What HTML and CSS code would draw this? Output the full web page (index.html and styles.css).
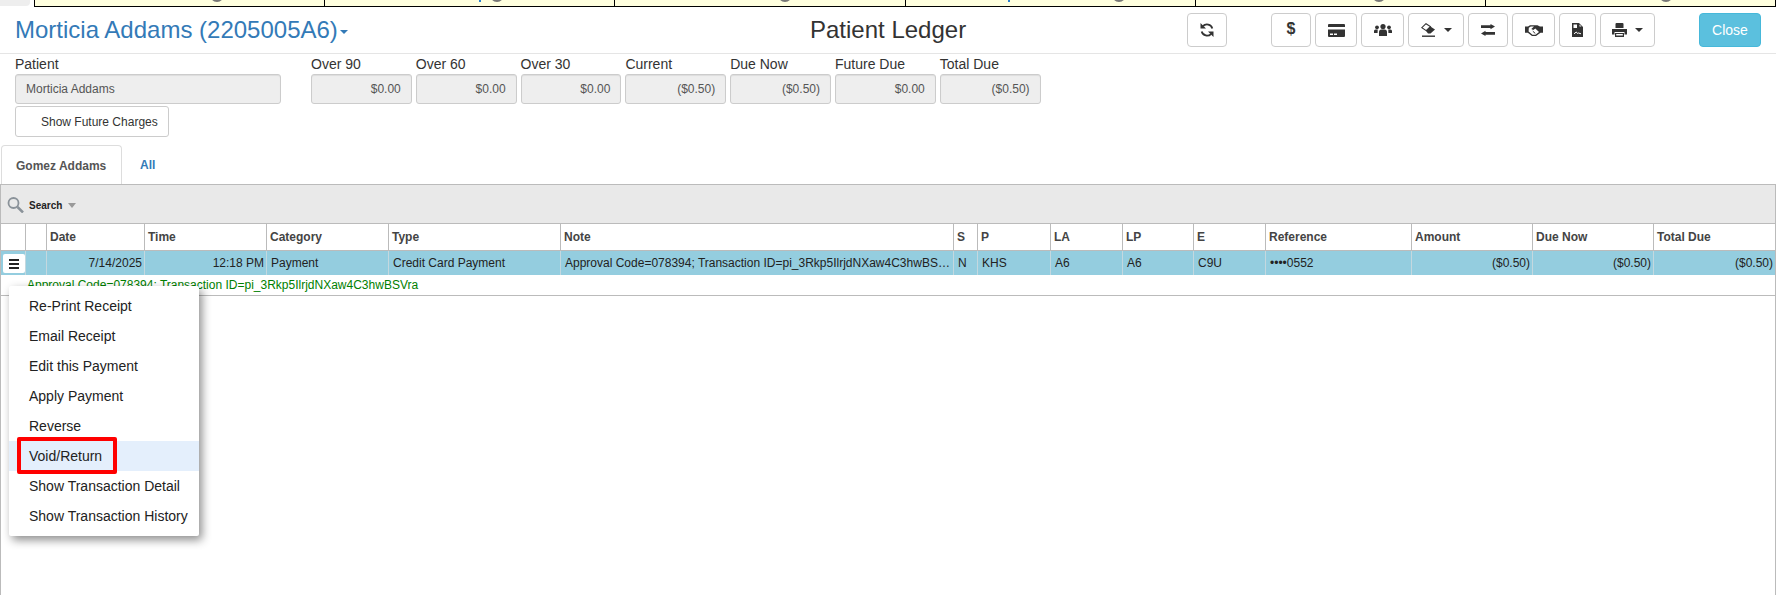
FILE: index.html
```html
<!DOCTYPE html>
<html lang="en">
<head>
    <meta charset="UTF-8">
    <title>Patient Ledger</title>
    <link rel="stylesheet" href="styles.css">
</head>
<body>

    <div class="strip">
        <div class="strip-corner"></div>
        <div class="strip-cell"><span class="knob"></span></div>
        <div class="strip-cell"><span class="mark"></span><span class="knob"></span></div>
        <div class="strip-cell"><span class="knob"></span></div>
        <div class="strip-cell"><span class="mark"></span><span class="knob"></span></div>
        <div class="strip-cell"><span class="knob"></span></div>
        <div class="strip-cell"><span class="knob"></span></div>
    </div>

    <div class="header">
        <h1 class="patient-name">Morticia Addams (2205005A6)<span class="caret"></span></h1>
        <h2 class="page-title">Patient Ledger</h2>
        <div class="toolbar">
            <button class="tool tool-refresh">
                <svg width="14" height="14" viewBox="0 0 14 14"><path d="M12.300 5.400A5.500 5.500 0 0 0 2.900 3.200M1.700 8.600a5.500 5.500 0 0 0 9.400 2.200" fill="none" stroke="#333" stroke-width="1.800"/><path d="M.5 0v5.500H6zM13.500 14V8.500H8z" fill="#333"/></svg>
            </button>
            <button class="tool tool-dollar">$</button>
            <button class="tool tool-card">
                <svg width="17" height="13" viewBox="0 0 17 13"><path d="M1 0h15a1 1 0 0 1 1 1v2H0V1a1 1 0 0 1 1-1zM0 5.500h17V12a1 1 0 0 1-1 1H1a1 1 0 0 1-1-1zm2 4v1.500h3V9.500zm4 0v1.500h3V9.500z" fill="#333"/></svg>
            </button>
            <button class="tool tool-group">
                <svg width="18" height="12" viewBox="0 0 18 12"><circle cx="9" cy="2.600" r="2.600" fill="#333"/><circle cx="3" cy="3.300" r="1.900" fill="#333"/><circle cx="15" cy="3.300" r="1.900" fill="#333"/><path d="M5 12V8a2.500 2.500 0 0 1 2.500-2.500h3A2.500 2.500 0 0 1 13 8v4zM0 9V7a1.500 1.500 0 0 1 1.500-1.500h2.200L3.600 9zM18 9V7a1.500 1.500 0 0 0-1.500-1.500h-2.200l.1 3.500z" fill="#333"/></svg>
            </button>
            <button class="tool tool-eraser">
                <svg width="15" height="14" viewBox="0 0 15 14"><path d="M5 .7.8 4.700l4.400 2.900 4.200-4z" fill="#fff" stroke="#333" stroke-width="1.100"/><path d="M9.400 3.500 14 6.500l-4.500 4H7L4.800 7.800z" fill="#333"/><path d="M1 13.200h13" stroke="#333" stroke-width="1.400"/></svg>
                <span class="tool-caret"></span>
            </button>
            <button class="tool tool-exchange">
                <svg width="14" height="12" viewBox="0 0 14 12"><path d="M0 1.200h9.500V0L14 2.600 9.500 5.200V4H0zM14 8H4.500V6.800L0 9.400 4.500 12v-1.200H14z" fill="#333"/></svg>
            </button>
            <button class="tool tool-hands">
                <svg width="18" height="11" viewBox="0 0 18 11"><path d="M0 1.500h3L5 .3h7.500L15 1.500h3v6.200h-2.500L11 11H7L2.800 7.700H0z" fill="#333"/><path d="M3.800 2.800 5.800 1.500H9L6.300 4l2 1 2-1.500 3.700 3.400L10.500 9.700H7.500L3.600 6.500z" fill="#fff"/><path d="M7.800 6.200 10.300 8.500" stroke="#333"/></svg>
            </button>
            <button class="tool tool-file">
                <svg width="11" height="14" viewBox="0 0 11 14"><path d="M0 0h7l4 4v10H0z" fill="#333"/><path d="M1.500 1.500h3.500v3.500H1.500zM7.500 1.500 9.500 3.500h-2z" fill="#fff"/><path d="M2 10.800 4.300 9l1.200 1.500 1-.5 2.500.8" fill="none" stroke="#fff"/></svg>
            </button>
            <button class="tool tool-print">
                <svg width="15" height="14" viewBox="0 0 15 14"><path d="M3.500 1a1 1 0 0 1 1-1h6a1 1 0 0 1 1 1v4h-8zM0 6h15v5.500h-2.500V9h-10v2.500H0zM3 10h9v4H3z" fill="#333"/><path d="M4.200 11h6.600v1.500H4.200z" fill="#fff"/></svg>
                <span class="tool-caret"></span>
            </button>
            <button class="close-btn">Close</button>
        </div>
    </div>

    <div class="summary">
        <div class="field field-patient">
            <label>Patient</label>
            <div class="readonly">Morticia Addams</div>
        </div>
        <div class="field-group">
            <div class="field">
                <label>Over 90</label>
                <div class="readonly amount">$0.00</div>
            </div>
            <div class="field">
                <label>Over 60</label>
                <div class="readonly amount">$0.00</div>
            </div>
            <div class="field">
                <label>Over 30</label>
                <div class="readonly amount">$0.00</div>
            </div>
            <div class="field">
                <label>Current</label>
                <div class="readonly amount">($0.50)</div>
            </div>
            <div class="field">
                <label>Due Now</label>
                <div class="readonly amount">($0.50)</div>
            </div>
            <div class="field">
                <label>Future Due</label>
                <div class="readonly amount">$0.00</div>
            </div>
            <div class="field">
                <label>Total Due</label>
                <div class="readonly amount">($0.50)</div>
            </div>
        </div>
    </div>
    <button class="future-btn">Show Future Charges</button>

    <div class="tabs">
        <div class="tab active">Gomez Addams</div>
        <div class="tab">All</div>
    </div>

    <div class="grid-panel">
        <div class="search-bar">
            <svg width="18" height="16" viewBox="0 0 18 16"><circle cx="6.500" cy="6" r="5" fill="none" stroke="#8a9299" stroke-width="1.800"/><path d="M10.500 10l5.500 5.500" stroke="#8a9299" stroke-width="2.500"/></svg>
            <span class="search-label">Search</span>
            <span class="search-caret"></span>
        </div>

        <table class="ledger">
            <colgroup>
                <col class="c-menu"><col class="c-blank"><col class="c-date"><col class="c-time"><col class="c-cat"><col class="c-type"><col class="c-note"><col class="c-s"><col class="c-p"><col class="c-la"><col class="c-lp"><col class="c-e"><col class="c-ref"><col class="c-amt"><col class="c-due"><col class="c-total">
            </colgroup>
            <thead>
                <tr>
                    <th></th><th></th><th>Date</th><th>Time</th><th>Category</th><th>Type</th><th>Note</th><th>S</th><th>P</th><th>LA</th><th>LP</th><th>E</th><th>Reference</th><th>Amount</th><th>Due Now</th><th>Total Due</th>
                </tr>
            </thead>
            <tbody>
                <tr class="selected">
                    <td class="menu-cell"><span class="menu-btn"><i></i><i></i><i></i></span></td>
                    <td></td>
                    <td class="num">7/14/2025</td>
                    <td class="num">12:18 PM</td>
                    <td>Payment</td>
                    <td>Credit Card Payment</td>
                    <td class="note">Approval Code=078394; Transaction ID=pi_3Rkp5IlrjdNXaw4C3hwBSVra</td>
                    <td>N</td>
                    <td>KHS</td>
                    <td>A6</td>
                    <td>A6</td>
                    <td>C9U</td>
                    <td>••••0552</td>
                    <td class="num">($0.50)</td>
                    <td class="num">($0.50)</td>
                    <td class="num">($0.50)</td>
                </tr>
                <tr class="detail">
                    <td></td>
                    <td colspan="15">Approval Code=078394; Transaction ID=pi_3Rkp5IlrjdNXaw4C3hwBSVra</td>
                </tr>
            </tbody>
        </table>

        <ul class="context-menu">
            <li>Re-Print Receipt</li>
            <li>Email Receipt</li>
            <li>Edit this Payment</li>
            <li>Apply Payment</li>
            <li>Reverse</li>
            <li class="hover"><span class="callout">Void/Return</span></li>
            <li>Show Transaction Detail</li>
            <li>Show Transaction History</li>
        </ul>
    </div>

</body>
</html>
```

FILE: styles.css
```css
* {
    box-sizing: border-box;
}

html, body {
    height: 595px;
    overflow: hidden;
}

body {
    margin: 0;
    background-color: #fff;
    font-family: "Liberation Sans", Arial, sans-serif;
    color: #333;
}

/* cut-off strip above the header */
.strip {
    display: flex;
    height: 7px;
    width: 1776px;
}

.strip-corner {
    width: 30px;
    margin-right: 4px;
    height: 6px;
    background-color: #eee;
    border-bottom-right-radius: 4px;
}

.strip-cell {
    position: relative;
    flex: 1;
    background-color: #ffffdf;
    border-left: 1px solid #000;
    border-bottom: 1px solid #000;
    overflow: hidden;
}

.strip-cell:last-child {
    border-right: 1px solid #000;
}

.knob {
    position: absolute;
    top: -12px;
    left: 175px;
    width: 14px;
    height: 14px;
    border-radius: 50%;
    background-color: #777;
}

.mark {
    position: absolute;
    top: 0;
    left: 154px;
    width: 2px;
    height: 2px;
    background-color: #2a7fd0;
}

.strip-cell:nth-child(3) .knob { left: 165px; }
.strip-cell:nth-child(4) .knob { left: 163px; }
.strip-cell:nth-child(5) .knob { left: 206px; }
.strip-cell:nth-child(5) .mark { left: 102px; }
.strip-cell:nth-child(6) .knob { left: 176px; }
.strip-cell:nth-child(7) .knob { left: 173px; }

.header {
    display: flex;
    align-items: center;
    height: 47px;
    width: 1776px;
    border-bottom: 1px solid #e5e5e5;
    padding-left: 15px;
}

.patient-name {
    flex: 0 0 795px;
    margin: 0;
    font-size: 24px;
    font-weight: normal;
    color: #337ab7;
}

.caret {
    display: inline-block;
    margin-left: 2px;
    vertical-align: middle;
    border-top: 4px solid #337ab7;
    border-left: 4px solid transparent;
    border-right: 4px solid transparent;
}

.page-title {
    flex: 0 0 377px;
    margin: 0;
    font-size: 24px;
    font-weight: normal;
    color: #333;
}

.toolbar {
    display: flex;
    align-items: center;
    gap: 4px;
}

.tool {
    display: flex;
    flex-shrink: 0;
    align-items: center;
    justify-content: center;
    height: 34px;
    padding: 0;
    background-color: #fff;
    border: 1px solid #ccc;
    border-radius: 4px;
    color: #333;
}

.tool-refresh {
    width: 40px;
    margin-right: 40px;
}

.tool-dollar {
    width: 40px;
    padding-bottom: 3px;
    font-family: inherit;
    font-size: 16px;
    font-weight: bold;
}

.tool-card {
    width: 42px;
}

.tool-group {
    width: 43px;
}

.tool-eraser {
    width: 56px;
}

.tool-exchange {
    width: 40px;
}

.tool-hands {
    width: 43px;
}

.tool-file {
    width: 37px;
}

.tool-print {
    width: 55px;
    margin-right: 40px;
}

.tool-caret {
    margin-left: 8px;
    border-top: 4px solid #333;
    border-left: 4px solid transparent;
    border-right: 4px solid transparent;
}

.close-btn {
    flex-shrink: 0;
    width: 62px;
    height: 34px;
    padding: 0;
    background-color: #5bc0de;
    border: 1px solid #46b8da;
    border-radius: 4px;
    color: #fff;
    font-family: inherit;
    font-size: 14px;
}

.summary {
    display: flex;
    padding-left: 15px;
}

.field label {
    display: block;
    font-size: 14px;
    line-height: 20px;
    color: #333;
}

.field-patient {
    width: 266px;
    margin-right: 30px;
}

.field-patient .readonly {
    width: 266px;
}

.field-group {
    display: flex;
    gap: 4px;
}

.readonly {
    width: 100.800px;
    height: 30px;
    line-height: 28px;
    padding: 0 10px;
    background-color: #eee;
    border: 1px solid #ccc;
    border-radius: 3px;
    font-size: 12px;
    color: #555;
    box-shadow: inset 0 1px 1px rgba(0, 0, 0, 0.075);
}

.amount {
    text-align: right;
}

.future-btn {
    display: block;
    width: 154px;
    height: 31px;
    margin: 2px 0 0 15px;
    padding: 0 0 0 25px;
    background-color: #fff;
    border: 1px solid #ccc;
    border-radius: 3px;
    font-family: inherit;
    font-size: 12px;
    color: #333;
    white-space: nowrap;
    text-align: left;
}

.tabs {
    display: flex;
    height: 39px;
    margin: 8px 0 0 1px;
    font-size: 12px;
    font-weight: bold;
}

.tab {
    padding: 13px 0 0 18px;
    color: #337ab7;
}

.tab.active {
    flex: 0 0 121px;
    padding-left: 14px;
    color: #555;
    background-color: #fff;
    border: 1px solid #ddd;
    border-bottom: none;
    border-radius: 4px 4px 0 0;
}

.grid-panel {
    position: relative;
    height: 411px;
    width: 1776px;
    border: 1px solid #bbb;
    border-bottom: none;
}

.search-bar {
    display: flex;
    align-items: center;
    height: 38px;
    padding: 2px 0 0 6px;
    background-color: #e9e9e9;
    font-size: 10px;
    font-weight: bold;
    color: #222;
}

.search-label {
    margin-left: 4px;
}

.search-caret {
    margin-left: 6px;
    border-top: 5px solid #999;
    border-left: 4px solid transparent;
    border-right: 4px solid transparent;
}

.ledger {
    width: 1774px;
    table-layout: fixed;
    border-collapse: separate;
    border-spacing: 0;
    font-size: 12px;
    color: #222;
}

.c-menu { width: 24px; }
.c-blank { width: 21px; }
.c-date { width: 98px; }
.c-time { width: 122px; }
.c-cat { width: 122px; }
.c-type { width: 172px; }
.c-note { width: 393px; }
.c-s { width: 24px; }
.c-p { width: 73px; }
.c-la { width: 72px; }
.c-lp { width: 71px; }
.c-e { width: 72px; }
.c-ref { width: 146px; }
.c-amt { width: 121px; }
.c-due { width: 121px; }
.c-total { width: 122px; }

.ledger th {
    height: 28px;
    padding: 0 0 0 3px;
    text-align: left;
    font-size: 12px;
    font-weight: bold;
    color: #444;
    background-color: #fff;
    border-top: 1px solid #bbb;
    border-left: 1px solid #bbb;
    border-bottom: 1px solid #bbb;
}

.ledger th:first-child {
    border-left: none;
}

.ledger td {
    padding: 0 2px 0 4px;
    white-space: nowrap;
    overflow: hidden;
    text-overflow: ellipsis;
}

.selected td {
    height: 24px;
    background-color: #94cddf;
    border-left: 1px solid #c4d8df;
}

.selected td:first-child {
    border-left: none;
}

.ledger .num {
    text-align: right;
}

.ledger .menu-cell {
    padding: 3px 0 2px 2px;
    background-color: #94cddf;
}

.menu-btn {
    display: flex;
    flex-direction: column;
    align-items: center;
    justify-content: center;
    gap: 2px;
    height: 19px;
    background-color: #fff;
    border-radius: 2px;
}

.menu-btn i {
    width: 10px;
    height: 2px;
    background-color: #222;
}

.ledger .detail td {
    height: 21px;
    padding: 0 0 0 2px;
    color: #008000;
    border-bottom: 1px solid #bbb;
}

.context-menu {
    position: absolute;
    left: 8px;
    top: 101px;
    width: 190px;
    margin: 0;
    padding: 5px 0;
    list-style: none;
    background-color: #fff;
    border-radius: 2px;
    box-shadow: 3px 4px 10px rgba(0, 0, 0, 0.45);
    font-size: 14px;
    color: #222;
}

.context-menu li {
    height: 30px;
    line-height: 30px;
    padding-left: 20px;
}

.context-menu li.hover {
    background-color: #e4effc;
}

.callout {
    position: relative;
    display: inline-block;
}

/* red annotation round the item */
.callout::after {
    content: "";
    box-sizing: border-box;
    position: absolute;
    left: -12px;
    top: -4px;
    width: 100px;
    height: 37px;
    border: 4px solid #f00;
    border-radius: 2px;
}
```
